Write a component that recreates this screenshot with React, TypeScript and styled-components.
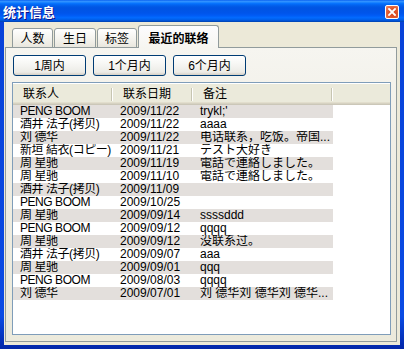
import React from "react";
import styled, { createGlobalStyle } from "styled-components";

const Global = createGlobalStyle`
  html, body { margin: 0; padding: 0; overflow: hidden; }
  body { font-family: "Liberation Sans", "Noto Sans CJK SC", sans-serif; font-size: 12px; color: #000; }
`;

const Window = styled.div`
  width: 404px;
  height: 349px;
  display: flex;
  flex-direction: column;
  background: #0831d9;
`;

const TitleBar = styled.div`
  height: 22px;
  flex: none;
  display: flex;
  align-items: center;
  justify-content: space-between;
  padding: 0 5px 0 3px;
  box-sizing: border-box;
  background: linear-gradient(to bottom, #0058ee 0%, #3593ff 5%, #288eff 9%, #127dff 13%, #036ffc 17%, #0262ee 24%, #0057e5 32%, #0054e3 40%, #0055eb 60%, #005bf5 70%, #026afe 80%, #0062ef 88%, #0052d6 94%, #0040ab 100%);
`;

const Title = styled.div`
  font-family: "Noto Sans CJK SC", sans-serif;
  font-weight: 700;
  font-size: 13px;
  line-height: 13px;
  color: #fff;
  text-shadow: 1px 1px #0f1089;
  margin-top: 1px;
`;

const CloseBtn = styled.div`
  width: 14px;
  height: 14px;
  box-sizing: border-box;
  border: 1px solid #fff;
  border-radius: 2px;
  margin-top: 2px;
  background: radial-gradient(circle at 60% 60%, #d5401a 0%, #e35c30 55%, #f08d6e 100%);
  display: flex;
  align-items: center;
  justify-content: center;
`;

const Frame = styled.div`
  flex: 1;
  display: flex;
  padding: 0 4px 4px 4px;
  background: linear-gradient(to bottom, #0842d8 0%, #0a4be4 90%, #0226a8 100%);
  min-height: 0;
`;

const Client = styled.div`
  flex: 1;
  display: flex;
  flex-direction: column;
  background: #ece9d8;
  padding: 4px 3px 3px 1px;
  min-width: 0;
`;

const TabStrip = styled.div`
  display: flex;
  align-items: flex-end;
  gap: 1px;
  height: 22px;
  padding-left: 7px;
  margin-bottom: -1px;
  position: relative;
  z-index: 1;
`;

const Tab = styled.div<{ $w: number; $active?: boolean }>`
  width: ${(p) => p.$w}px;
  height: ${(p) => (p.$active ? 23 : 20)}px;
  box-sizing: border-box;
  border: 1px solid #919b9c;
  border-bottom: ${(p) => (p.$active ? "none" : "1px solid #919b9c")};
  border-radius: 3px 3px 0 0;
  background: ${(p) =>
    p.$active
      ? "linear-gradient(to bottom, #fcfcfe 0%, #f6f5f0 100%)"
      : "linear-gradient(to bottom, #ffffff 0%, #f3f2ec 60%, #e9e7de 100%)"};
  display: flex;
  align-items: center;
  justify-content: center;
  font-family: "Noto Sans CJK SC", sans-serif;
  font-size: 12px;
  font-weight: ${(p) => (p.$active ? 700 : 400)};
  line-height: 12px;
  padding-top: ${(p) => (p.$active ? 1 : 0)}px;
`;

const Panel = styled.div`
  flex: 1;
  display: flex;
  flex-direction: column;
  border: 1px solid #919b9c;
  background: linear-gradient(to bottom, #f6f5f0 0%, #efede3 40%, #eceadc 100%);
  padding: 7px 5px 6px 6px;
  min-height: 0;
`;

const ButtonRow = styled.div`
  display: flex;
  gap: 7px;
  padding-left: 1px;
  margin-bottom: 6px;
`;

const Button = styled.div`
  width: 73px;
  height: 21px;
  box-sizing: border-box;
  border: 1px solid #003c74;
  border-radius: 3px;
  background: linear-gradient(to bottom, #ffffff 0%, #f7f7f4 40%, #ecebe6 85%, #d6d0c5 100%);
  display: flex;
  align-items: center;
  justify-content: center;
  font-family: "Liberation Sans", "Noto Sans CJK SC", sans-serif;
  font-size: 12px;
  line-height: 12px;
`;

const List = styled.div`
  flex: 1;
  border: 1px solid #7f9db9;
  background: #fff;
  display: flex;
  flex-direction: column;
  min-height: 0;
`;

const HeaderRow = styled.div`
  display: grid;
  grid-template-columns: 100px 80px 140px 1fr;
  height: 22px;
  box-sizing: border-box;
  background: #ebeadb;
  border-top: 1px solid #fff;
  box-shadow: inset 0 -1px #cbc7b8, inset 0 -2px #d6d2c2, inset 0 -3px #e2decd;
`;

const HeaderCell = styled.div<{ $divider?: boolean }>`
  display: flex;
  align-items: center;
  padding: 0 0 3px 10px;
  font-family: "Noto Sans CJK SC", sans-serif;
  font-size: 12px;
  line-height: 12px;
  background: ${(p) =>
    p.$divider
      ? "linear-gradient(#c7c5b2, #c7c5b2) right 1px top 4px / 1px 13px no-repeat, linear-gradient(#fff, #fff) right 0 top 4px / 1px 13px no-repeat"
      : "none"};
`;

const Row = styled.div`
  display: grid;
  grid-template-columns: 100px 80px 140px 1fr;
  height: 13px;
`;

const Cell = styled.div<{ $shade?: boolean; $tight?: boolean }>`
  background: ${(p) => (p.$shade ? "#e3dfdc" : "#fff")};
  padding-left: 7px;
  font-size: 12px;
  line-height: 13px;
  letter-spacing: ${(p) => (p.$tight ? "-0.45px" : "0")};
  white-space: nowrap;
  overflow: hidden;
`;

const Filler = styled.div`
  background: #fff;
`;

const rows: [string, string, string][] = [
  ["PENG BOOM", "2009/11/22", "trykl;'"],
  ["酒井 法子(拷贝)", "2009/11/22", "aaaa"],
  ["刘 德华", "2009/11/22", "电话联系，吃饭。帝国..."],
  ["新垣 結衣(コピー)", "2009/11/21", "テスト大好き"],
  ["周 星驰", "2009/11/19", "電話で連絡しました。"],
  ["周 星驰", "2009/11/10", "電話で連絡しました。"],
  ["酒井 法子(拷贝)", "2009/11/09", ""],
  ["PENG BOOM", "2009/10/25", ""],
  ["周 星驰", "2009/09/14", "ssssddd"],
  ["PENG BOOM", "2009/09/12", "qqqq"],
  ["周 星驰", "2009/09/12", "没联系过。"],
  ["酒井 法子(拷贝)", "2009/09/07", "aaa"],
  ["周 星驰", "2009/09/01", "qqq"],
  ["PENG BOOM", "2009/08/03", "qqqq"],
  ["刘 德华", "2009/07/01", "刘 德华刘 德华刘 德华..."],
];

export default function App() {
  return (
    <>
      <Global />
      <Window>
        <TitleBar>
          <Title>统计信息</Title>
          <CloseBtn>
            <svg width="8" height="8" viewBox="0 0 8 8">
              <path d="M1 1 L7 7 M7 1 L1 7" stroke="#fff" strokeWidth="1.8" strokeLinecap="square" />
            </svg>
          </CloseBtn>
        </TitleBar>
        <Frame>
          <Client>
            <TabStrip>
              <Tab $w={41}>人数</Tab>
              <Tab $w={42}>生日</Tab>
              <Tab $w={40}>标签</Tab>
              <Tab $w={81} $active>最近的联络</Tab>
            </TabStrip>
            <Panel>
              <ButtonRow>
                <Button>1周内</Button>
                <Button>1个月内</Button>
                <Button>6个月内</Button>
              </ButtonRow>
              <List>
                <HeaderRow>
                  <HeaderCell $divider>联系人</HeaderCell>
                  <HeaderCell $divider>联系日期</HeaderCell>
                  <HeaderCell $divider>备注</HeaderCell>
                  <HeaderCell />
                </HeaderRow>
                {rows.map((r, i) => (
                  <Row key={i}>
                    <Cell $shade={i % 2 === 0} $tight>{r[0]}</Cell>
                    <Cell $shade={i % 2 === 0}>{r[1]}</Cell>
                    <Cell $shade={i % 2 === 0}>{r[2]}</Cell>
                    <Filler />
                  </Row>
                ))}
              </List>
            </Panel>
          </Client>
        </Frame>
      </Window>
    </>
  );
}
